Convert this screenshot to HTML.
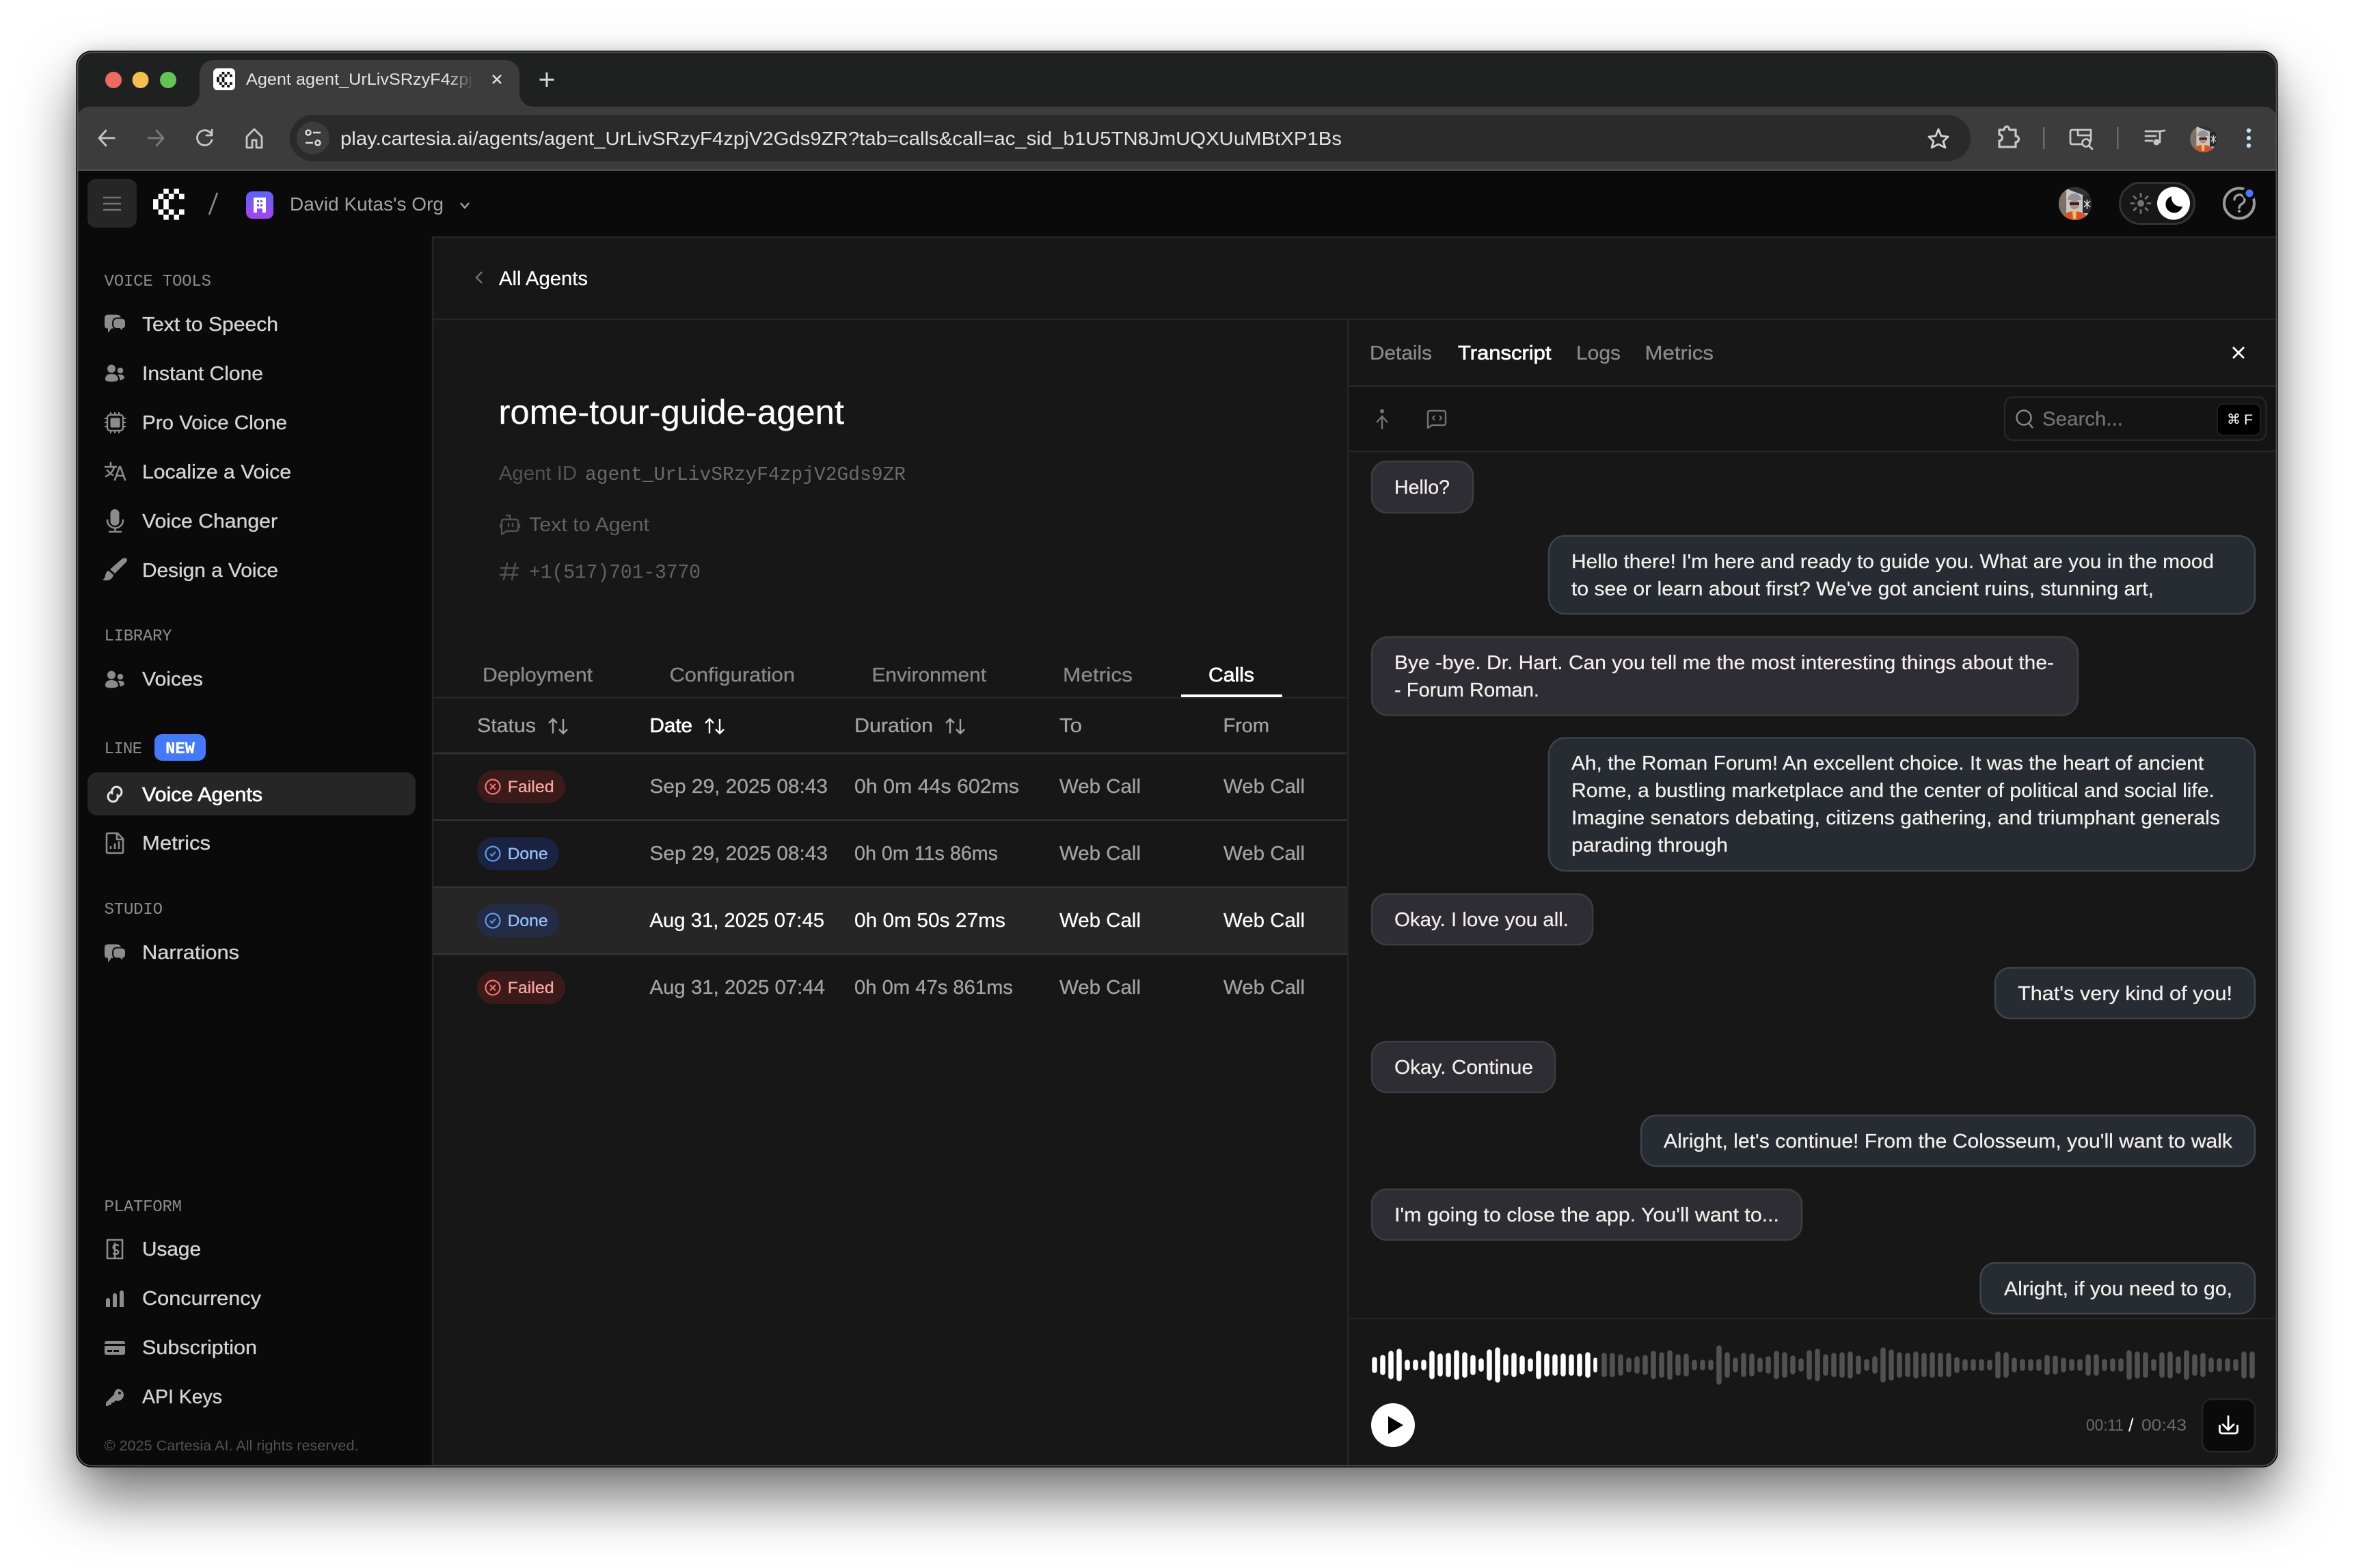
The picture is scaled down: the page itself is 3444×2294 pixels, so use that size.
<!DOCTYPE html>
<html lang="en">
<head>
<meta charset="utf-8">
<title>Cartesia Agent</title>
<style>
html,body{margin:0;padding:0;background:#fff;width:3444px;height:2294px;overflow:hidden}
#shadow{position:absolute;left:112px;top:75px;width:3220px;height:2071px;border-radius:22px;box-shadow:0 46px 84px rgba(0,0,0,.54),0 0 24px rgba(0,0,0,.16)}
svg{position:absolute;left:0;top:0}
text{font-family:"Liberation Sans",sans-serif;font-size:29px;white-space:pre}
.m{font-family:"Liberation Mono",monospace}
.n{fill:#d4d4d4;stroke:#d4d4d4;stroke-width:.35}
.h{fill:#8c8c8c;font-size:24px;font-family:"Liberation Mono",monospace}
.r{fill:#a3a3a3;stroke:#a3a3a3;stroke-width:.3}
.w{fill:#fff;stroke:#fff;stroke-width:.25}
.t{fill:#f2f0ec;stroke:#f2f0ec;stroke-width:.25}
.g{fill:#8a8a8a;stroke:#8a8a8a;stroke-width:.3}
.b{stroke:#fff;stroke-width:.7}
.ic{fill:none;stroke:#8c8c8c;stroke-width:2.600;stroke-linecap:round;stroke-linejoin:round}
.f{fill:#8c8c8c}
.cu{fill:#2e2d33;stroke:#3d3c42;stroke-width:2.500}
.ca{fill:#272b32;stroke:#3c434d;stroke-width:2.500}
.sm{font-size:24px}
</style>
</head>
<body>
<div id="shadow"></div>
<svg width="3444" height="2294" viewBox="0 0 3444 2294" xmlns="http://www.w3.org/2000/svg">
<defs>
<clipPath id="win"><rect x="112" y="75" width="3220" height="2071" rx="22"/></clipPath>
<clipPath id="msgs"><rect x="1973" y="662" width="1359" height="1266"/></clipPath>
<clipPath id="avc"><circle cx="0" cy="0" r="24"/></clipPath>
<linearGradient id="org" x1="0" y1="0" x2="0" y2="1"><stop offset="0" stop-color="#5f63f6"/><stop offset="1" stop-color="#a444f0"/></linearGradient>
<linearGradient id="fade" x1="0" y1="0" x2="1" y2="0"><stop offset="0" stop-color="#3c3c3c" stop-opacity="0"/><stop offset="1" stop-color="#3c3c3c"/></linearGradient>
<path id="cl" d="M2 0h1v1h-1zM4 0h1v1h-1zM1 1h1v1h-1zM3 1h1v1h-1zM5 1h1v1h-1zM0 2h1v2h-1zM2 2h1v2h-1zM1 4h1v1h-1zM3 4h1v1h-1zM5 4h1v1h-1zM2 5h1v1h-1zM4 5h1v1h-1z"/>
<g id="av" clip-path="url(#avc)">
<rect x="-24" y="-24" width="48" height="48" fill="#c9c6c2"/>
<rect x="-24" y="-24" width="11" height="48" fill="#7d7166"/>
<path d="M-14-24H24V-8L-8-20z" fill="#35303a"/>
<rect x="11" y="-12" width="13" height="26" fill="#26262b"/>
<path d="M13-4l9 9M22-4l-9 9M17.500-6v14" stroke="#ddd" stroke-width="1.500"/>
<path d="M-11-5a10 10 0 0 1 20 0z" fill="#8e9499"/>
<circle cx="-1" cy="1" r="7" fill="#b98a72"/>
<rect x="-8" y="-2" width="14" height="4" fill="#2b2140"/>
<path d="M-18 24v-7q7-6 17-6t17 6v7z" fill="#d9512a"/>
<path d="M-4 11h6l-1 11h-4z" fill="#e5c465"/>
</g>
<g id="chat"><path class="f" d="M158 460.500h12q7 0 7 6v8q0 6-7 6h-7l-5 6.500v-6.500h-1q-4 0-4-5v-10q0-5 5-5z"/><path class="f" stroke="#0a0a0a" stroke-width="2" d="M171 465.500h7q6 0 6 6v4q0 5-4 5.500v5l-5-5h-4q-6 0-6-7.500 0-8 6-8z"/></g>
<g id="ppl"><circle class="f" cx="163" cy="539.500" r="6"/><path class="f" d="M154 555q0-8 9-8t10 8q-1 3-9 3.500-10 0-10-3.500z"/><circle class="f" cx="176" cy="542" r="4.300"/><path class="f" d="M172 548q10-1 10 5-3 3-6.500 3.500 0-5-3.500-8.500z"/></g>
</defs>

<g clip-path="url(#win)">
<!-- title bar -->
<rect x="112" y="75" width="3220" height="100" fill="#1f2120"/>
<!-- toolbar -->
<path d="M112 250V176a20 20 0 0 1 20-20H3312a20 20 0 0 1 20 20V250z" fill="#3c3c3c"/>
<path d="M272 156a20 20 0 0 0 20-20V108a20 20 0 0 1 20-20H740a20 20 0 0 1 20 20V136a20 20 0 0 0 20 20z" fill="#3c3c3c"/>
<rect x="112" y="247" width="3220" height="3" fill="#4a4a4a"/>
<circle cx="166" cy="117" r="12" fill="#ed6a5e"/><circle cx="205.500" cy="117" r="12" fill="#f5bf4f"/><circle cx="246" cy="117" r="12" fill="#61c554"/>
<rect x="312" y="100" width="32" height="32" rx="6" fill="#fff"/>
<use href="#cl" transform="translate(317 105) scale(3.800)" fill="#111"/>
<text x="360" y="124" class="sm" fill="#e3e3e3" textLength="331" lengthAdjust="spacingAndGlyphs">Agent agent_UrLivSRzyF4zpj</text>
<rect x="655" y="96" width="38" height="40" fill="url(#fade)"/>
<rect x="691" y="96" width="20" height="40" fill="#3c3c3c"/>
<path d="M721 110l12 12M733 110l-12 12" stroke="#e3e3e3" stroke-width="2.400" fill="none"/>
<path d="M800 106v21M789.500 116.500h21" stroke="#d4d4d4" stroke-width="3" fill="none"/>

<rect x="424" y="168" width="2459" height="68" rx="34" fill="#2a2a2a"/>
<circle cx="458" cy="202" r="24" fill="#3c3c3c"/>
<g fill="none" stroke="#d8d8d8" stroke-width="2.600"><circle cx="451" cy="194" r="3.500"/><path d="M458 194h11M447 209h11"/><circle cx="465" cy="209" r="3.500"/></g>
<text x="498" y="212" fill="#e3e3e3" style="font-size:28px" textLength="1465" lengthAdjust="spacingAndGlyphs">play.cartesia.ai/agents/agent_UrLivSRzyF4zpjV2Gds9ZR?tab=calls&amp;call=ac_sid_b1U5TN8JmUQXUuMBtXP1Bs</text>
<g fill="none" stroke-width="2.800" stroke-linecap="round" stroke-linejoin="round">
<path d="M167 202H146M155 191L145 202L155 213" stroke="#c7c7c7"/>
<path d="M217 202H238M229 191L239 202L229 213" stroke="#7b7b7b"/>
<path d="M309 196a11 11 0 1 0 1 9M310 190v8h-8" stroke="#c7c7c7"/>
<path d="M361 200l11-11 11 11v16h-8v-11h-6v11h-8z" stroke="#c7c7c7"/>
<path d="M2836 189l4 10 10 1-7 7 3 9-10-5-10 5 3-9-7-7 10-1z" stroke="#d4d4d4"/>
<path d="M2925 215v-9a4.500 4.500 0 0 0 0-9v-7h7q1-5 4-5t4 5h9v9a4.500 4.500 0 0 1 0 9v7z" stroke="#c7c7c7" stroke-width="3.200"/>
<path d="M3045 211h-13q-3 0-3-3v-15q0-3 3-3h27v16M3040 190v8h19" stroke="#c7c7c7"/>
<circle cx="3052" cy="209" r="5.500" stroke="#c7c7c7"/><path d="M3056 213l5 5" stroke="#c7c7c7"/>
<path d="M3139 192h19M3139 199h15M3139 206h10M3160 208v-16l7-1" stroke="#c7c7c7"/>
</g>
<circle cx="3155" cy="208" r="4.500" fill="#c7c7c7"/>
<rect x="2989" y="186" width="2.500" height="32" fill="#6b6b6b"/><rect x="3097" y="186" width="2.500" height="32" fill="#6b6b6b"/>
<use href="#av" transform="translate(3224 203) scale(.82)"/>
<circle cx="3290" cy="191" r="3.200" fill="#c2e0f7"/><circle cx="3290" cy="202" r="3.200" fill="#c2e0f7"/><circle cx="3290" cy="213" r="3.200" fill="#c2e0f7"/>

<!-- app -->
<rect x="112" y="250" width="3220" height="1900" fill="#0a0a0a"/>
<rect x="633" y="346" width="2699" height="1804" fill="#171717"/>
<path d="M633 2146V347H3332" fill="none" stroke="#262626" stroke-width="2.500"/>

<rect x="128" y="262" width="72" height="71" rx="12" fill="#262626"/>
<path d="M151 289h26M151 298h26M151 307h26" stroke="#737373" stroke-width="2.600"/>
<use href="#cl" transform="translate(224 276) scale(7.600)" fill="#fff"/>
<path d="M318 282l-12 32" stroke="#8a8a8a" stroke-width="2.600"/>
<rect x="360" y="280" width="40" height="40" rx="9" fill="url(#org)"/>
<path d="M371 289h18v22h-5v-6h-8v6h-5z" fill="#fff"/><path d="M376 293h3v3h-3zM381 293h3v3h-3zM376 299h3v3h-3zM381 299h3v3h-3z" fill="#6a4ff0"/>
<text x="424" y="308" fill="#a3a3a3" style="font-size:28px" textLength="225" lengthAdjust="spacingAndGlyphs">David Kutas's Org</text>
<path d="M674 297l6 7 6-7" fill="none" stroke="#a3a3a3" stroke-width="2.400"/>

<use href="#av" transform="translate(3036 298)"/>
<rect x="3101.500" y="267.500" width="109" height="60" rx="30" fill="#171717" stroke="#333" stroke-width="3"/>
<circle cx="3132" cy="297.500" r="5" fill="#737373"/>
<path d="M3132 283.500v4M3132 307.500v4M3118 297.500h4M3142 297.500h4M3122 287.500l3 3M3139 304.500l3 3M3122 307.500l3-3M3139 290.500l3-3" stroke="#737373" stroke-width="2.800" stroke-linecap="round"/>
<circle cx="3180" cy="297.500" r="24" fill="#fff"/>
<path d="M3177 287A12.500 12.500 0 1 0 3193 302A13.500 13.500 0 0 1 3177 287z" fill="#000"/>
<circle cx="3276" cy="297.500" r="22" fill="none" stroke="#9a9a9a" stroke-width="4"/>
<path d="M3269 292a7.500 7 0 1 1 11.500 6c-2.500 1.500-4.500 3-4.500 6" fill="none" stroke="#9a9a9a" stroke-width="3.400" stroke-linecap="round"/>
<circle cx="3276" cy="309" r="2.200" fill="#9a9a9a"/>
<circle cx="3291" cy="282.700" r="10" fill="#0a0a0a"/><circle cx="3291" cy="282.700" r="5.500" fill="#4479fb"/>

<!-- sidebar -->
<text x="152.500" y="418" class="h" textLength="156.500" lengthAdjust="spacing">VOICE TOOLS</text>
<use href="#chat"/>
<text x="208" y="484" class="n" textLength="199" lengthAdjust="spacingAndGlyphs">Text to Speech</text>
<use href="#ppl"/>
<text x="208" y="556" class="n" textLength="177" lengthAdjust="spacingAndGlyphs">Instant Clone</text>
<rect x="161.500" y="611.500" width="14" height="14" rx="2" class="f"/>
<rect x="157" y="607" width="23" height="23" rx="4" fill="none" stroke="#8c8c8c" stroke-width="2.400"/>
<path d="M162 603v3M168 603v3M174 603v3M162 631v3M168 631v3M174 631v3M153 612h3M153 618h3M153 624h3M181 612h3M181 618h3M181 624h3" stroke="#8c8c8c" stroke-width="2"/>
<text x="208" y="628" class="n" textLength="212" lengthAdjust="spacingAndGlyphs">Pro Voice Clone</text>
<path d="M154 683h16M162 677v6M167 683q-2 9-12 14M157 688q4 5 8 7" class="ic"/>
<path d="M168 702l7-19h1l7 19M170.500 696h10" class="ic"/>
<text x="208" y="700" class="n" textLength="218" lengthAdjust="spacingAndGlyphs">Localize a Voice</text>
<rect x="161.500" y="745" width="13" height="24" rx="6.500" class="f"/>
<path d="M157 761a11.500 11.500 0 0 0 23 0M168.500 773v5M160 778h17" class="ic"/>
<text x="208" y="772" class="n" textLength="198" lengthAdjust="spacingAndGlyphs">Voice Changer</text>
<path class="f" d="M185 817q2 2 0 5l-17 17-7-6 17-15q5-3 7-1zM159 835l7 6q-1 6-8 8-5 1-8-1 4-2 4-6 1-6 5-7z"/>
<text x="208" y="844" class="n" textLength="199" lengthAdjust="spacingAndGlyphs">Design a Voice</text>
<text x="152.500" y="937" class="h" textLength="99" lengthAdjust="spacing">LIBRARY</text>
<use href="#ppl" transform="translate(0 448)"/>
<text x="208" y="1003" class="n" textLength="89" lengthAdjust="spacingAndGlyphs">Voices</text>
<text x="152.500" y="1102" class="h" textLength="55.500" lengthAdjust="spacing">LINE</text>
<rect x="226" y="1074" width="75" height="39" rx="11" fill="#4479fb"/>
<text x="242" y="1102" class="m w" style="font-size:24px;font-weight:700" textLength="43" lengthAdjust="spacingAndGlyphs">NEW</text>
<rect x="128" y="1130" width="480" height="63" rx="14" fill="#262626"/>
<g fill="none" stroke="#e5e5e5" stroke-width="3" stroke-linecap="round">
<path d="M164 1158a7.500 7.500 0 1 0 5 14 7.500 7.500 0 0 0 3-9"/>
<path d="M172 1166a7.500 7.500 0 1 0-5-14 7.500 7.500 0 0 0-3 9"/>
</g>
<text x="208" y="1172" class="w b" textLength="176" lengthAdjust="spacingAndGlyphs">Voice Agents</text>
<path d="M158 1219h14l8 8v19q0 2-2 2h-20q-2 0-2-2v-25q0-2 2-2zM171 1220v8h8" class="ic"/>
<path d="M162 1242v-4M168 1242v-8M174 1242v-11" stroke="#8c8c8c" stroke-width="2.600"/>
<text x="208" y="1243" class="n" textLength="100" lengthAdjust="spacingAndGlyphs">Metrics</text>
<text x="152.500" y="1337" class="h" textLength="85.500" lengthAdjust="spacing">STUDIO</text>
<use href="#chat" transform="translate(0 921)"/>
<text x="208" y="1403" class="n" textLength="142" lengthAdjust="spacingAndGlyphs">Narrations</text>
<text x="152.500" y="1772" class="h" textLength="113.500" lengthAdjust="spacing">PLATFORM</text>
<path d="M157 1814h22v27h-22z" class="ic"/>
<path d="M173 1822q-5-2-7 1-1 4 2 5 6 1 5 5-2 3-7 1M168 1819v20" class="ic"/>
<text x="208" y="1837" class="n" textLength="86" lengthAdjust="spacingAndGlyphs">Usage</text>
<path class="f" d="M155 1902a3 3 0 0 1 6 0v10h-6zM165 1895a3 3 0 0 1 6 0v17h-6zM175 1891a3 3 0 0 1 6 0v21h-6z"/>
<text x="208" y="1909" class="n" textLength="174" lengthAdjust="spacingAndGlyphs">Concurrency</text>
<path class="f" d="M156 1962h24q3 0 3 3v1h-30v-1q0-3 3-3zM153 1969h30v10q0 3-3 3h-24q-3 0-3-3z"/>
<rect x="157" y="1975" width="7" height="3" fill="#0a0a0a"/><rect x="166" y="1975" width="8" height="3" fill="#0a0a0a"/>
<text x="208" y="1981" class="n" textLength="168" lengthAdjust="spacingAndGlyphs">Subscription</text>
<path class="f" d="M172 2032a9 9 0 0 1 9 9 9 9 0 0 1-12 8l-3 3h-3v3h-3l-2 2h-3v-5l12-12a9 9 0 0 1 5-8z"/>
<circle cx="175" cy="2038" r="2" fill="#0a0a0a"/>
<text x="208" y="2053" class="n" textLength="117" lengthAdjust="spacingAndGlyphs">API Keys</text>
<text x="152.500" y="2122" fill="#525252" style="font-size:21px" textLength="372" lengthAdjust="spacingAndGlyphs">© 2025 Cartesia AI. All rights reserved.</text>

<!-- main header -->
<rect x="634" y="466" width="2698" height="2.500" fill="#262626"/>
<path d="M705 398l-8 8 8 8" fill="none" stroke="#737373" stroke-width="2.400"/>
<text x="730" y="417" class="w" textLength="130" lengthAdjust="spacingAndGlyphs">All Agents</text>
<text x="729.500" y="620" class="w" style="font-size:50px" textLength="505.500" lengthAdjust="spacingAndGlyphs">rome-tour-guide-agent</text>
<text x="730" y="702" fill="#525252" textLength="114" lengthAdjust="spacingAndGlyphs">Agent ID</text>
<text x="856" y="702" class="m" fill="#6a6a6a" textLength="469" lengthAdjust="spacingAndGlyphs">agent_UrLivSRzyF4zpjV2Gds9ZR</text>
<g fill="none" stroke="#525252" stroke-width="2.400" stroke-linejoin="round" stroke-linecap="round">
<path d="M737 760h18q3 0 3 3v11q0 3-3 3h-14l-7 5v-19q0-3 3-3zM746 760v-6h-5M732 768v3M760 768v3"/>
<path d="M744 766v4M750 766v4"/>
<path d="M742 824l-5 24M754 824l-5 24M733 831h25M732 841h25"/>
</g>
<text x="774" y="777" fill="#626262" textLength="176" lengthAdjust="spacingAndGlyphs">Text to Agent</text>
<text x="774" y="845.500" class="m" fill="#626262" style="font-size:30px" textLength="251" lengthAdjust="spacingAndGlyphs">+1(517)701-3770</text>

<!-- tabs -->
<text x="706" y="997" class="g" textLength="161" lengthAdjust="spacingAndGlyphs">Deployment</text>
<text x="979.500" y="997" class="g" textLength="183.500" lengthAdjust="spacingAndGlyphs">Configuration</text>
<text x="1275.500" y="997" class="g" textLength="167.500" lengthAdjust="spacingAndGlyphs">Environment</text>
<text x="1555" y="997" class="g" textLength="102" lengthAdjust="spacingAndGlyphs">Metrics</text>
<text x="1768" y="997" class="w b" textLength="67" lengthAdjust="spacingAndGlyphs">Calls</text>
<rect x="634" y="1019.500" width="1337" height="2.500" fill="#262626"/>
<rect x="1728" y="1016" width="148" height="4" fill="#fff"/>

<!-- table -->
<g>
<rect x="634" y="1298" width="1337" height="98" fill="#262626"/>
<path d="M634 1102H1971M634 1199.800H1971M634 1297.800H1971M634 1395.800H1971" stroke="#333" stroke-width="2.500"/>
<text x="698" y="1071" class="r" textLength="86" lengthAdjust="spacingAndGlyphs">Status</text>
<text x="950.500" y="1071" class="w b" textLength="62.500" lengthAdjust="spacingAndGlyphs">Date</text>
<text x="1250" y="1071" class="r" textLength="115" lengthAdjust="spacingAndGlyphs">Duration</text>
<text x="1550" y="1071" class="r" textLength="33" lengthAdjust="spacingAndGlyphs">To</text>
<text x="1789.500" y="1071" class="r" textLength="67.500" lengthAdjust="spacingAndGlyphs">From</text>
<path d="M809 1073v-21M803 1058l6-6 6 6M824 1052v21M818 1067l6 6 6-6" fill="none" stroke="#a3a3a3" stroke-width="2.400"/>
<path d="M1038 1073v-21M1032 1058l6-6 6 6M1053 1052v21M1047 1067l6 6 6-6" fill="none" stroke="#fff" stroke-width="2.400"/>
<path d="M1390 1073v-21M1384 1058l6-6 6 6M1405 1052v21M1399 1067l6 6 6-6" fill="none" stroke="#a3a3a3" stroke-width="2.400"/>

<!-- row 1 -->
<rect x="698" y="1127" width="129" height="48" rx="24" fill="#3b1a1a"/>
<circle cx="721" cy="1151" r="10.500" fill="none" stroke="#f87171" stroke-width="2.200"/><path d="M717 1147l8 8M725 1147l-8 8" stroke="#f87171" stroke-width="2"/>
<text x="742.600" y="1159" class="sm" fill="#fca5a5" stroke="#fca5a5" stroke-width=".3" textLength="68" lengthAdjust="spacingAndGlyphs">Failed</text>
<text x="950.500" y="1160" class="r" textLength="260.500" lengthAdjust="spacingAndGlyphs">Sep 29, 2025 08:43</text>
<text x="1250" y="1160" class="r" textLength="241" lengthAdjust="spacingAndGlyphs">0h 0m 44s 602ms</text>
<text x="1550" y="1160" class="r" textLength="119" lengthAdjust="spacingAndGlyphs">Web Call</text>
<text x="1790" y="1160" class="r" textLength="119" lengthAdjust="spacingAndGlyphs">Web Call</text>
<!-- row 2 -->
<rect x="698" y="1225" width="120" height="48" rx="24" fill="#1a2340"/>
<circle cx="721" cy="1249" r="10.500" fill="none" stroke="#5b9bf8" stroke-width="2.200"/><path d="M717 1249l3 3 5-6" fill="none" stroke="#5b9bf8" stroke-width="2"/>
<text x="742.600" y="1257" class="sm" fill="#93c5fd" stroke="#93c5fd" stroke-width=".3" textLength="59" lengthAdjust="spacingAndGlyphs">Done</text>
<text x="950.500" y="1258" class="r" textLength="260.500" lengthAdjust="spacingAndGlyphs">Sep 29, 2025 08:43</text>
<text x="1250" y="1258" class="r" textLength="210" lengthAdjust="spacingAndGlyphs">0h 0m 11s 86ms</text>
<text x="1550" y="1258" class="r" textLength="119" lengthAdjust="spacingAndGlyphs">Web Call</text>
<text x="1790" y="1258" class="r" textLength="119" lengthAdjust="spacingAndGlyphs">Web Call</text>
<!-- row 3 -->
<rect x="698" y="1323" width="120" height="48" rx="24" fill="#232b45"/>
<circle cx="721" cy="1347" r="10.500" fill="none" stroke="#5b9bf8" stroke-width="2.200"/><path d="M717 1347l3 3 5-6" fill="none" stroke="#5b9bf8" stroke-width="2"/>
<text x="742.600" y="1355" class="sm" fill="#93c5fd" stroke="#93c5fd" stroke-width=".3" textLength="59" lengthAdjust="spacingAndGlyphs">Done</text>
<text x="950.500" y="1356" class="w" textLength="255.500" lengthAdjust="spacingAndGlyphs">Aug 31, 2025 07:45</text>
<text x="1250" y="1356" class="w" textLength="221" lengthAdjust="spacingAndGlyphs">0h 0m 50s 27ms</text>
<text x="1550" y="1356" class="w" textLength="119" lengthAdjust="spacingAndGlyphs">Web Call</text>
<text x="1790" y="1356" class="w" textLength="119" lengthAdjust="spacingAndGlyphs">Web Call</text>
<!-- row 4 -->
<rect x="698" y="1421" width="129" height="48" rx="24" fill="#3b1a1a"/>
<circle cx="721" cy="1445" r="10.500" fill="none" stroke="#f87171" stroke-width="2.200"/><path d="M717 1441l8 8M725 1441l-8 8" stroke="#f87171" stroke-width="2"/>
<text x="742.600" y="1453" class="sm" fill="#fca5a5" stroke="#fca5a5" stroke-width=".3" textLength="68" lengthAdjust="spacingAndGlyphs">Failed</text>
<text x="950.500" y="1454" class="r" textLength="256.500" lengthAdjust="spacingAndGlyphs">Aug 31, 2025 07:44</text>
<text x="1250" y="1454" class="r" textLength="232" lengthAdjust="spacingAndGlyphs">0h 0m 47s 861ms</text>
<text x="1550" y="1454" class="r" textLength="119" lengthAdjust="spacingAndGlyphs">Web Call</text>
<text x="1790" y="1454" class="r" textLength="119" lengthAdjust="spacingAndGlyphs">Web Call</text>
</g>

<!-- right panel -->
<rect x="1971" y="468" width="1361" height="96" fill="#171717"/>
<rect x="1973" y="566" width="1359" height="94" fill="#141414"/>
<path d="M1972 468V2146" stroke="#262626" stroke-width="2.500"/>
<path d="M1973 564.500H3332M1973 660.500H3332M1973 1929H3332" stroke="#262626" stroke-width="2.500"/>
<text x="2004" y="526" class="g" textLength="91" lengthAdjust="spacingAndGlyphs">Details</text>
<text x="2133" y="526" class="w b" textLength="136.500" lengthAdjust="spacingAndGlyphs">Transcript</text>
<text x="2306" y="526" class="g" textLength="65" lengthAdjust="spacingAndGlyphs">Logs</text>
<text x="2406.500" y="526" class="g" textLength="100.500" lengthAdjust="spacingAndGlyphs">Metrics</text>
<path d="M3267 508l16 16M3283 508l-16 16" stroke="#fff" stroke-width="2.800" fill="none"/>
<circle cx="2022" cy="601.500" r="3" fill="#737373"/>
<path d="M2022 609v19M2014 618l8-9 8 9" fill="none" stroke="#737373" stroke-width="2.400"/>
<path d="M2093 601h19q3 0 3 3v15q0 3-3 3h-17l-6 4v-22q0-3 3-3z" fill="none" stroke="#737373" stroke-width="2.400" stroke-linejoin="round"/>
<path d="M2099 608l-3 3.500 3 3.500M2106 608l3 3.500-3 3.500" fill="none" stroke="#737373" stroke-width="2"/>
<rect x="2933" y="581" width="382.500" height="63" rx="12" fill="#141414" stroke="#262626" stroke-width="2.500"/>
<circle cx="2961" cy="611" r="10.500" fill="none" stroke="#8a8a8a" stroke-width="2.400"/><path d="M2968 619l6 7" stroke="#8a8a8a" stroke-width="2.400"/>
<text x="2988" y="622.500" fill="#737373" stroke="#737373" stroke-width=".25" textLength="118" lengthAdjust="spacingAndGlyphs">Search...</text>
<rect x="3244" y="591" width="63" height="46" rx="9" fill="#000" stroke="#1f1f1f" stroke-width="2"/>
<text x="3258" y="620" fill="#fff" style="font-size:20px;font-family:'DejaVu Sans',sans-serif">⌘</text>
<text x="3283" y="621" fill="#fff" style="font-size:21px" textLength="13" lengthAdjust="spacingAndGlyphs">F</text>

<!-- transcript -->
<g clip-path="url(#msgs)">
<rect x="2007" y="675" width="148" height="75" rx="22" class="cu"/>
<text x="2040" y="722.500" class="t" textLength="81" lengthAdjust="spacingAndGlyphs">Hello?</text>
<rect x="2266" y="784" width="1033" height="114" rx="24" class="ca"/>
<text x="2299" y="831" class="t" textLength="940" lengthAdjust="spacingAndGlyphs">Hello there! I'm here and ready to guide you. What are you in the mood</text>
<text x="2299" y="871" class="t" textLength="852" lengthAdjust="spacingAndGlyphs">to see or learn about first? We've got ancient ruins, stunning art,</text>
<rect x="2007" y="932" width="1033" height="114.500" rx="24" class="cu"/>
<text x="2040" y="979" class="t" textLength="965" lengthAdjust="spacingAndGlyphs">Bye -bye. Dr. Hart. Can you tell me the most interesting things about the-</text>
<text x="2040" y="1019" class="t" textLength="212" lengthAdjust="spacingAndGlyphs">- Forum Roman.</text>
<rect x="2266" y="1079.500" width="1033" height="194.500" rx="24" class="ca"/>
<text x="2299" y="1126" class="t" textLength="925" lengthAdjust="spacingAndGlyphs">Ah, the Roman Forum! An excellent choice. It was the heart of ancient</text>
<text x="2299" y="1166" class="t" textLength="941" lengthAdjust="spacingAndGlyphs">Rome, a bustling marketplace and the center of political and social life.</text>
<text x="2299" y="1206" class="t" textLength="949" lengthAdjust="spacingAndGlyphs">Imagine senators debating, citizens gathering, and triumphant generals</text>
<text x="2299" y="1246" class="t" textLength="229" lengthAdjust="spacingAndGlyphs">parading through</text>
<rect x="2007" y="1308" width="323" height="74" rx="22" class="cu"/>
<text x="2040" y="1355" class="t" textLength="255" lengthAdjust="spacingAndGlyphs">Okay. I love you all.</text>
<rect x="2919" y="1416" width="380" height="74" rx="22" class="ca"/>
<text x="2952" y="1463" class="t" textLength="314" lengthAdjust="spacingAndGlyphs">That's very kind of you!</text>
<rect x="2007" y="1524" width="268" height="74" rx="22" class="cu"/>
<text x="2040" y="1571" class="t" textLength="203" lengthAdjust="spacingAndGlyphs">Okay. Continue</text>
<rect x="2401" y="1632" width="898" height="74" rx="22" class="ca"/>
<text x="2434" y="1679" class="t" textLength="832" lengthAdjust="spacingAndGlyphs">Alright, let's continue! From the Colosseum, you'll want to walk</text>
<rect x="2007" y="1740" width="629" height="74" rx="22" class="cu"/>
<text x="2040" y="1787" class="t" textLength="563" lengthAdjust="spacingAndGlyphs">I'm going to close the app. You'll want to...</text>
<rect x="2897.500" y="1847.500" width="401.500" height="74.500" rx="22" class="ca"/>
<text x="2932" y="1895" class="t" textLength="334" lengthAdjust="spacingAndGlyphs">Alright, if you need to go,</text>
</g>

<!-- waveform -->
<path fill="none" stroke="#fff" stroke-width="7.500" stroke-linecap="round" d="M2011 1989v16M2023 1986v22M2035 1980v34M2047 1977v40M2059 1993v8M2071 1993v8M2083 1993v8M2095 1980v34M2107 1984v26M2119 1983v28M2131 1979v36M2143 1982v30M2155 1986v22M2167 1991v12M2179 1978v38M2191 1975v44M2203 1985v24M2215 1983v28M2227 1987v20M2239 1991v12M2251 1980v34M2263 1984v26M2275 1985v24M2287 1984v26M2299 1985v24M2311 1984v26M2323 1982v30"/>
<path fill="none" stroke="#fff" stroke-width="5.500" stroke-linecap="round" d="M2334 1989v16"/>
<path fill="none" stroke="#525252" stroke-width="7.500" stroke-linecap="round" d="M2347 1983v28M2359 1983v28M2371 1985v24M2383 1990v14M2395 1988v18M2407 1986v22M2419 1980v34M2431 1982v30M2443 1979v36M2455 1985v24M2467 1984v26M2479 1993v8M2491 1993v8M2503 1993v8M2515 1972v50M2527 1982v30M2539 1990v14M2551 1983v28M2563 1984v26M2575 1990v14M2587 1988v18M2599 1980v34M2611 1982v30M2623 1987v20M2635 1991v12M2647 1979v36M2659 1977v40M2671 1985v24M2683 1983v28M2695 1982v30M2707 1981v32M2719 1987v20M2731 1992v10M2743 1988v18M2755 1975v44M2767 1978v38M2779 1982v30M2791 1983v28M2803 1981v32M2815 1983v28M2827 1982v30M2839 1983v28M2851 1983v28M2863 1989v16M2875 1992v10M2887 1992v10M2899 1992v10M2911 1993v8M2923 1981v32M2935 1982v30M2947 1990v14M2959 1992v10M2971 1992v10M2983 1992v10M2995 1986v22M3007 1987v20M3019 1990v14M3031 1992v10M3043 1992v10M3055 1985v24M3067 1985v24M3079 1992v10M3091 1991v12M3103 1991v12M3115 1979v36M3127 1981v32M3139 1982v30M3151 1992v10M3163 1982v30M3175 1981v32M3187 1988v18M3199 1979v36M3211 1985v24M3223 1983v28M3235 1990v14M3247 1991v12M3259 1991v12M3271 1992v10M3283 1981v32M3295 1981v32"/>
<circle cx="2038" cy="2085" r="32" fill="#fff"/>
<path d="M2031 2072L2053 2085L2031 2098z" fill="#000"/>
<text x="3052" y="2093" fill="#6b6b6b" class="sm" textLength="55" lengthAdjust="spacingAndGlyphs">00:11</text>
<text x="3114" y="2094" fill="#fff" style="font-size:27px">/</text>
<text x="3133" y="2093" fill="#6b6b6b" class="sm" textLength="66" lengthAdjust="spacingAndGlyphs">00:43</text>
<rect x="3222" y="2047" width="77" height="77" rx="14" fill="#0a0a0a" stroke="#262626" stroke-width="2.500"/>
<path d="M3260 2072v19M3252 2084l8 8 8-8M3247.500 2086v7q0 4 4 4h18q4 0 4-4v-7" fill="none" stroke="#fff" stroke-width="2.800" stroke-linecap="round" stroke-linejoin="round"/>
</g>

<!-- window edge -->
<rect x="112" y="75" width="3220" height="2071" rx="22" fill="none" stroke="#000" stroke-width="1.500"/>
<rect x="113.500" y="76.500" width="3217" height="2068" rx="21" fill="none" stroke="#565656" stroke-width="1.800"/>
</svg>
</body>
</html>
